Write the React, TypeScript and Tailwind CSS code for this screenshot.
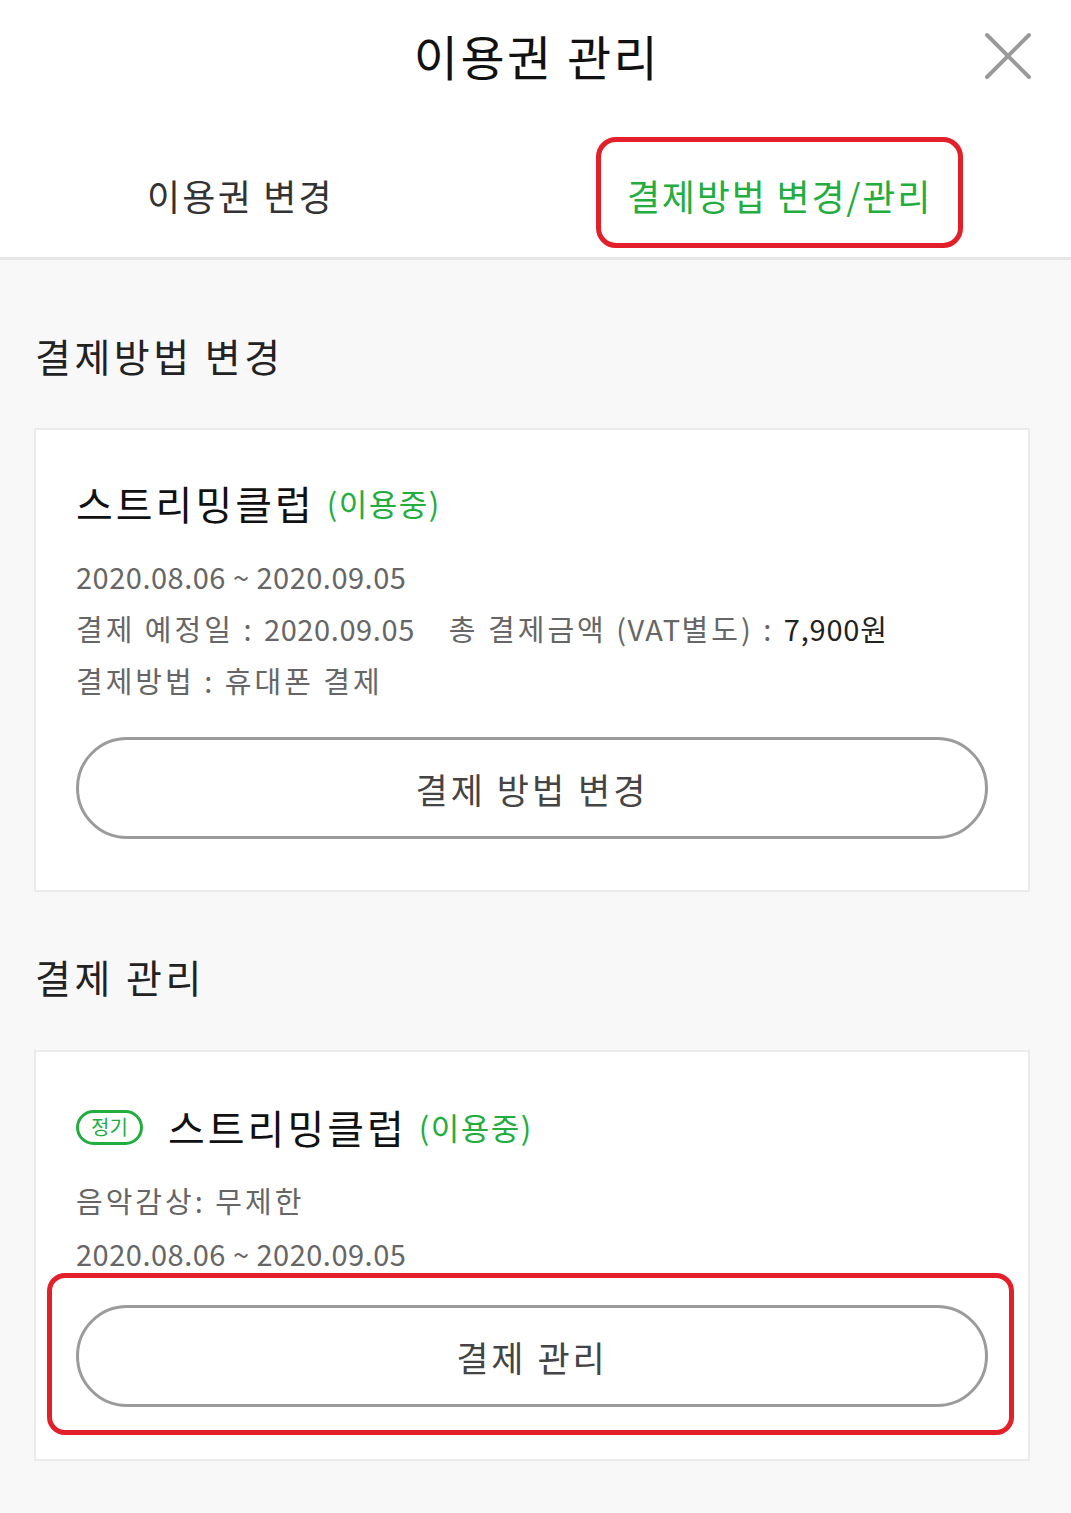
import React from "react";

const green = "text-[#22ad3f]";

function CloseIcon() {
  return (
    <svg width="48" height="48" viewBox="0 0 48 48" fill="none" stroke="#9a9a9a" strokeWidth="4" strokeLinecap="round">
      <path d="M3 3L45 45M45 3L3 45" />
    </svg>
  );
}

// hangul in the shot runs wider than Noto CJK, so korean runs get extra tracking
function K({ children }: { children: React.ReactNode }) {
  return <span className="tracking-[3px]">{children}</span>;
}

function PillButton({ label }: { label: string }) {
  return (
    <button className="flex h-[102px] w-full items-center justify-center rounded-full border-[3px] border-[#9b9b9b] bg-white text-[35px] leading-none tracking-[3px] text-[#444]">
      {label}
    </button>
  );
}

function Title({ badge }: { badge?: boolean }) {
  return (
    <div className="flex h-[50px] items-center">
      {badge ? (
        <span className={`mr-[25px] flex h-[35px] w-[67px] items-center justify-center rounded-full border-[3px] border-[#22ad3f] text-[20px] leading-none ${green}`}>
          정기
        </span>
      ) : null}
      <span className="text-[40px] leading-[50px] tracking-[3px] text-[#111]">스트리밍클럽</span>
      <span className={`ml-[12px] text-[31px] leading-[50px] tracking-[1.5px] ${green}`}>(이용중)</span>
    </div>
  );
}

export default function App() {
  return (
    <div className="min-h-screen w-full bg-[#f8f8f8] font-['Noto_Sans_CJK_KR','Noto_Sans',sans-serif]">
      <header className="bg-white">
        <div className="relative flex h-[110px] items-center justify-center">
          <h1 className="pl-[3px] text-[48px] leading-none tracking-[2.5px] text-[#111]">이용권 관리</h1>
          <div className="absolute left-[984px] top-[32px]">
            <CloseIcon />
          </div>
        </div>
        <nav className="flex h-[150px] items-start border-b-[3px] border-[#e6e6e6]">
          <div className="mt-[60px] w-[596px] pl-[147px] text-[36px] leading-[50px] tracking-[2.2px] text-[#333]">이용권 변경</div>
          <div className="mt-[27px] flex h-[111px] w-[367px] items-center justify-center rounded-[20px] border-[5px] border-[#e3202a] pt-[4px]">
            <span className={`text-[36px] leading-[50px] tracking-[1.8px] ${green}`}>결제방법 변경/관리</span>
          </div>
        </nav>
      </header>

      <main className="pb-[51px] pl-[34px] pr-[41px]">
        <h2 className="mt-[70px] pl-[1px] text-[39px] leading-[50px] tracking-[3.5px] text-[#222]">결제방법 변경</h2>
        <section className="mt-[48px] border-2 border-[#ebebeb] bg-white px-[40px] pb-[51px] pt-[48px]">
          <Title />
          <div className="mt-[22px] text-[29px] leading-[52px] text-[#666]">
            <p className="tracking-[0.5px]">2020.08.06 ~ 2020.09.05</p>
            <p>
              <K>결제 예정일 : </K>
              <span className="tracking-[0.6px]">2020.09.05</span>
              <span className="ml-[34px]">
                <K>총 결제금액 </K>
                <span className="tracking-[1.5px]">(VAT</span>
                <K>별도) : </K>
              </span>
              <span className="tracking-[0.8px] text-[#222]">7,900원</span>
            </p>
            <p>
              <K>결제방법 : 휴대폰 결제</K>
            </p>
          </div>
          <div className="mt-[31px]">
            <PillButton label="결제 방법 변경" />
          </div>
        </section>

        <h2 className="mt-[59px] pl-[1px] text-[39px] leading-[50px] tracking-[3.5px] text-[#222]">결제 관리</h2>
        <section className="mt-[49px] border-2 border-[#ebebeb] bg-white px-[40px] pb-[52px] pt-[50px]">
          <Title badge />
          <div className="mt-[22px] text-[29px] leading-[53px] text-[#666]">
            <p>
              <K>음악감상: 무제한</K>
            </p>
            <p className="tracking-[0.5px]">2020.08.06 ~ 2020.09.05</p>
          </div>
          <div className="relative mt-[25px]">
            <PillButton label="결제 관리" />
            <div className="pointer-events-none absolute -bottom-[28px] -left-[29px] -right-[26px] -top-[32px] rounded-[18px] border-[5px] border-[#e3202a]" />
          </div>
        </section>
      </main>
    </div>
  );
}
